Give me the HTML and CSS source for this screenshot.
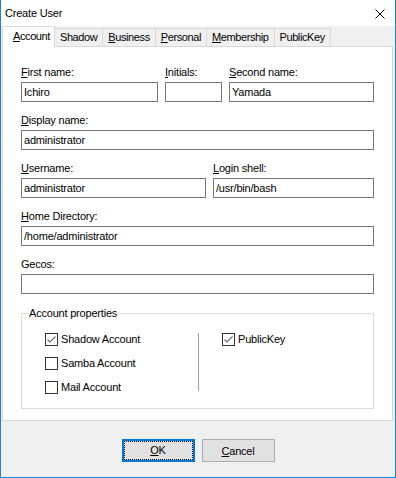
FILE: index.html
```html
<!DOCTYPE html>
<html lang="en">
<head>
  <meta charset="UTF-8">
  <title>Create User</title>
  <link rel="stylesheet" href="styles.css">
</head>
<body>

<div class="window">
  <!-- Title bar -->
  <div class="titlebar">
    <span class="title">Create User</span>
    <span class="close">
      <svg width="10" height="10" viewBox="0 0 10 10"><path d="M0.5 0.5L9.5 9.5M9.5 0.5L0.5 9.5" stroke="#000" stroke-width="1" fill="none"/></svg>
    </span>
  </div>

  <!-- Tabs -->
  <div class="tabs">
    <div class="tab active"><u>A</u>ccount</div>
    <div class="tab">Shadow</div>
    <div class="tab"><u>B</u>usiness</div>
    <div class="tab"><u>P</u>ersonal</div>
    <div class="tab"><u>M</u>embership</div>
    <div class="tab">PublicKey</div>
  </div>

  <!-- Account page -->
  <div class="panel">
    <div class="row row-names">
      <div class="field">
        <label><u>F</u>irst name:</label>
        <input type="text" value="Ichiro">
      </div>
      <div class="field">
        <label><u>I</u>nitials:</label>
        <input type="text" value="">
      </div>
      <div class="field">
        <label><u>S</u>econd name:</label>
        <input type="text" value="Yamada">
      </div>
    </div>

    <div class="field">
      <label><u>D</u>isplay name:</label>
      <input type="text" value="administrator">
    </div>

    <div class="row row-user">
      <div class="field">
        <label><u>U</u>sername:</label>
        <input type="text" value="administrator">
      </div>
      <div class="field">
        <label><u>L</u>ogin shell:</label>
        <input type="text" value="/usr/bin/bash">
      </div>
    </div>

    <div class="field">
      <label><u>H</u>ome Directory:</label>
      <input type="text" value="/home/administrator">
    </div>

    <div class="field">
      <label>Gecos:</label>
      <input type="text" value="">
    </div>

    <fieldset class="props">
      <legend>Account properties</legend>
      <div class="props-body">
        <div class="props-col left">
          <label class="check">
            <span class="box"><svg width="11" height="11" viewBox="0 0 11 11"><path d="M1.5 5.5L4 8L9.5 2.5" stroke="#6a6a6a" stroke-width="1.1" fill="none"/></svg></span>
            Shadow Account
          </label>
          <label class="check"><span class="box"></span>Samba Account</label>
          <label class="check"><span class="box"></span>Mail Account</label>
        </div>
        <div class="props-sep"></div>
        <div class="props-col right">
          <label class="check">
            <span class="box"><svg width="11" height="11" viewBox="0 0 11 11"><path d="M1.5 5.5L4 8L9.5 2.5" stroke="#6a6a6a" stroke-width="1.1" fill="none"/></svg></span>
            PublicKey
          </label>
        </div>
      </div>
    </fieldset>
  </div>

  <!-- Buttons -->
  <div class="footer">
    <button class="btn default"><u>O</u>K</button>
    <button class="btn"><u>C</u>ancel</button>
  </div>
</div>

</body>
</html>
```

FILE: styles.css
```css
/* Global */
* {
  box-sizing: border-box;
  margin: 0;
  padding: 0;
}
body {
  font-family: "Liberation Sans", Arial, sans-serif;
  font-size: 11px;
  letter-spacing: -0.2px;
  color: #000;
  background-color: #f0f0f0;
}

/* Window frame */
.window {
  width: 396px;
  height: 478px;
  display: flex;
  flex-direction: column;
  background-color: #f0f0f0;
  border: 1px solid #1883d7;
  border-top: none;
}
.titlebar {
  height: 26px;
  flex-shrink: 0;
  display: flex;
  align-items: center;
  justify-content: space-between;
  padding: 0 10px 0 4px;
  background-color: #fff;
  line-height: 26px;
}
.close svg {
  display: block;
  margin-top: 2px;
}

/* Tabs */
.tabs {
  height: 20px;
  flex-shrink: 0;
  display: flex;
  align-items: flex-end;
  padding-left: 1px;
}
.tab {
  height: 18px;
  line-height: 17px;
  padding: 0 5px;
  margin-left: -1px;
  border: 1px solid #d9d9d9;
  border-bottom: none;
  background-color: #f0f0f0;
  letter-spacing: -0.4px;
  white-space: nowrap;
}
.tab.active {
  height: 21px;
  line-height: 18px;
  padding: 0 4px 0 10px;
  margin-left: 0;
  margin-bottom: -1px;
  background-color: #fff;
  position: relative;
  z-index: 1;
}

/* Page */
.panel {
  flex: 1;
  display: flex;
  flex-direction: column;
  gap: 12px;
  margin: 0 2px 0 1px;
  padding: 19px 18px 0;
  background-color: #fff;
  border: 1px solid #d9d9d9;
}
.row {
  display: grid;
  column-gap: 7px;
}
.row-names {
  grid-template-columns: 137px 57px 1fr;
}
.row-user {
  grid-template-columns: 185px 1fr;
}
.field {
  display: flex;
  flex-direction: column;
  min-width: 0;
}
.field label {
  line-height: 13px;
  margin-bottom: 3px;
  white-space: nowrap;
}
.field input {
  width: 100%;
  height: 20px;
  padding: 0 2px 1px;
  border: 1px solid #7a7a7a;
  background-color: #fff;
  font: inherit;
  letter-spacing: inherit;
  color: #000;
  outline: none;
}

/* Account properties group */
.props {
  margin-top: 1px;
  padding: 0;
  min-width: 0;
  border: 1px solid #dcdcdc;
}
.props legend {
  margin-left: 7px;
  padding: 0;
  line-height: 13px;
}
.props-body {
  display: flex;
  padding: 13px 0 14px 23px;
}
.props-col {
  display: flex;
  flex-direction: column;
  gap: 11px;
}
.props-col.left {
  width: 153px;
}
.props-col.right {
  margin-left: 23px;
}
.props-sep {
  width: 1px;
  height: 58px;
  background-color: #a0a0a0;
}
.check {
  display: flex;
  align-items: flex-start;
  gap: 3px;
  line-height: 13px;
  white-space: nowrap;
}
.box {
  width: 13px;
  height: 13px;
  flex-shrink: 0;
  display: flex;
  align-items: center;
  justify-content: center;
  border: 1px solid #333;
  background-color: #fff;
}
.box svg {
  display: block;
}

/* Buttons */
.footer {
  height: 56px;
  flex-shrink: 0;
  display: flex;
  justify-content: center;
  align-items: flex-start;
  gap: 7px;
  padding-top: 18px;
}
.btn {
  width: 73px;
  height: 23px;
  line-height: 21px;
  text-align: center;
  background-color: #e1e1e1;
  border: 1px solid #adadad;
  font: inherit;
  letter-spacing: inherit;
  color: #000;
}
.btn.default {
  line-height: 19px;
  border: 2px solid #0078d7;
  outline: 1px dotted #000;
  outline-offset: -3px;
}
```
